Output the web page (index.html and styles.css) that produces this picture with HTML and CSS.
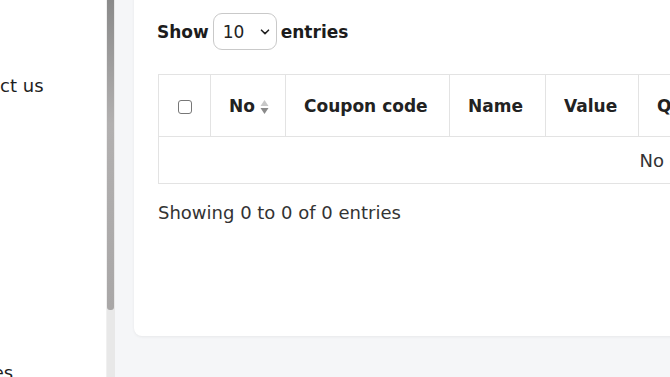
FILE: index.html
```html
<!DOCTYPE html>
<html>
<head>
<meta charset="utf-8">
<link rel="stylesheet" href="styles.css">
</head>
<body>
<div class="layout">
  <aside class="sidebar">
    <nav class="nav">
      <a class="nav-item first">Contact us</a>
      <a class="nav-item last">Coupon types</a>
    </nav>
  </aside>
  <div class="scrollbar"><div class="thumb"></div></div>
  <main class="main">
    <section class="card">
      <div class="length">
        <span class="lbl">Show</span>
        <div class="select"><span>10</span>
          <svg width="10" height="6" viewBox="0 0 10 6"><path d="M1.5 1.2 L5 4.6 L8.5 1.2" fill="none" stroke="#222" stroke-width="1.6" stroke-linecap="round" stroke-linejoin="round"/></svg>
        </div>
        <span class="lbl">entries</span>
      </div>
      <table class="table">
        <thead>
          <tr>
            <th class="c-check"><span class="checkbox"></span></th>
            <th class="c-no"><span class="th-in">No
              <svg class="sort" width="9" height="16" viewBox="0 0 9 16"><path d="M4.5 1 L8.5 7 L0.5 7 Z" fill="#c8c8c8"/><path d="M0.5 9 L8.5 9 L4.5 15 Z" fill="#8a8a8a"/></svg></span></th>
            <th class="c-code">Coupon code</th>
            <th class="c-name">Name</th>
            <th class="c-value">Value</th>
            <th class="c-qty">Quantity</th>
            <th class="c-rest"></th>
          </tr>
        </thead>
        <tbody>
          <tr><td colspan="7" class="empty">No data available in table</td></tr>
        </tbody>
      </table>
      <div class="info">Showing 0 to 0 of 0 entries</div>
    </section>
  </main>
</div>
</body>
</html>
```
FILE: styles.css
```css
* { box-sizing: border-box; }
html, body {
  margin: 0;
  padding: 0;
  width: 670px;
  height: 377px;
  overflow: hidden;
  background: #f5f6f8;
  font-family: "DejaVu Sans", "Liberation Sans", sans-serif;
  color: #222;
}
.layout {
  display: flex;
  height: 377px;
}
.sidebar {
  width: 106px;
  flex: none;
  background: #fff;
  overflow: hidden;
}
.nav {
  display: flex;
  flex-direction: column;
  align-items: flex-start;
  padding-top: 74px;
  gap: 263px;
}
.nav-item {
  font-size: 18px;
  color: #1e1e1e;
  white-space: nowrap;
  line-height: 24px;
}
.nav-item.first { margin-left: -53px; }
.nav-item.last { margin-left: -111px; }
.scrollbar {
  width: 9px;
  flex: none;
  background: #e8e8e8;
  border-left: 1px solid #f0f0f0;
}
.thumb {
  width: 7px;
  height: 310px;
  background: linear-gradient(#8a8a8a, #b2b0b0 40%, #a9a7a7);
  border-radius: 0 0 3px 3px;
}
.main {
  flex: 1;
  min-width: 0;
  padding-left: 19px;
  overflow: hidden;
}
.card {
  margin-top: -12px;
  width: 1300px;
  height: 348px;
  background: #fff;
  border-radius: 8px;
  box-shadow: 0 1px 3px rgba(0,0,0,0.06);
  padding: 25px 24px 0;
}
.length {
  display: flex;
  align-items: center;
  gap: 4px;
  height: 37px;
  margin-left: -1px;
}
.lbl {
  font-size: 17px;
  font-weight: 700;
  color: #1c1c1c;
}
.select {
  width: 64px;
  height: 37px;
  border: 1px solid #c9c9c9;
  border-radius: 9px;
  display: flex;
  align-items: center;
  justify-content: space-between;
  padding: 0 6px 0 9px;
  font-size: 17px;
  color: #222;
}
.table {
  margin-top: 24px;
  border-collapse: collapse;
  width: 1194px;
  border: 1px solid #e3e3e3;
}
.table th {
  height: 62px;
  border: 1px solid #e3e3e3;
  font-size: 17px;
  font-weight: 700;
  color: #222;
  text-align: left;
  padding: 0 18px;
  white-space: nowrap;
}
.table th.c-no { padding: 0 12px 0 18px; }
.c-check { width: 52px; text-align: center !important; padding: 0 !important; }
.c-no { width: 75px; }
.c-code { width: 164px; }
.c-name { width: 96px; }
.c-value { width: 93px; }
.c-qty { width: 120px; }
.checkbox {
  display: inline-block;
  width: 14px;
  height: 14px;
  border: 1px solid #777;
  border-radius: 3px;
  vertical-align: middle;
}
.th-in {
  display: inline-flex;
  align-items: center;
  gap: 5px;
}
.sort { display: block; margin-top: 2px; }
.empty {
  height: 47px;
  text-align: center;
  font-size: 18px;
  color: #333;
  border: 1px solid #e3e3e3;
}
.info {
  margin-top: 17px;
  font-size: 18px;
  line-height: 24px;
  color: #333;
}
```
